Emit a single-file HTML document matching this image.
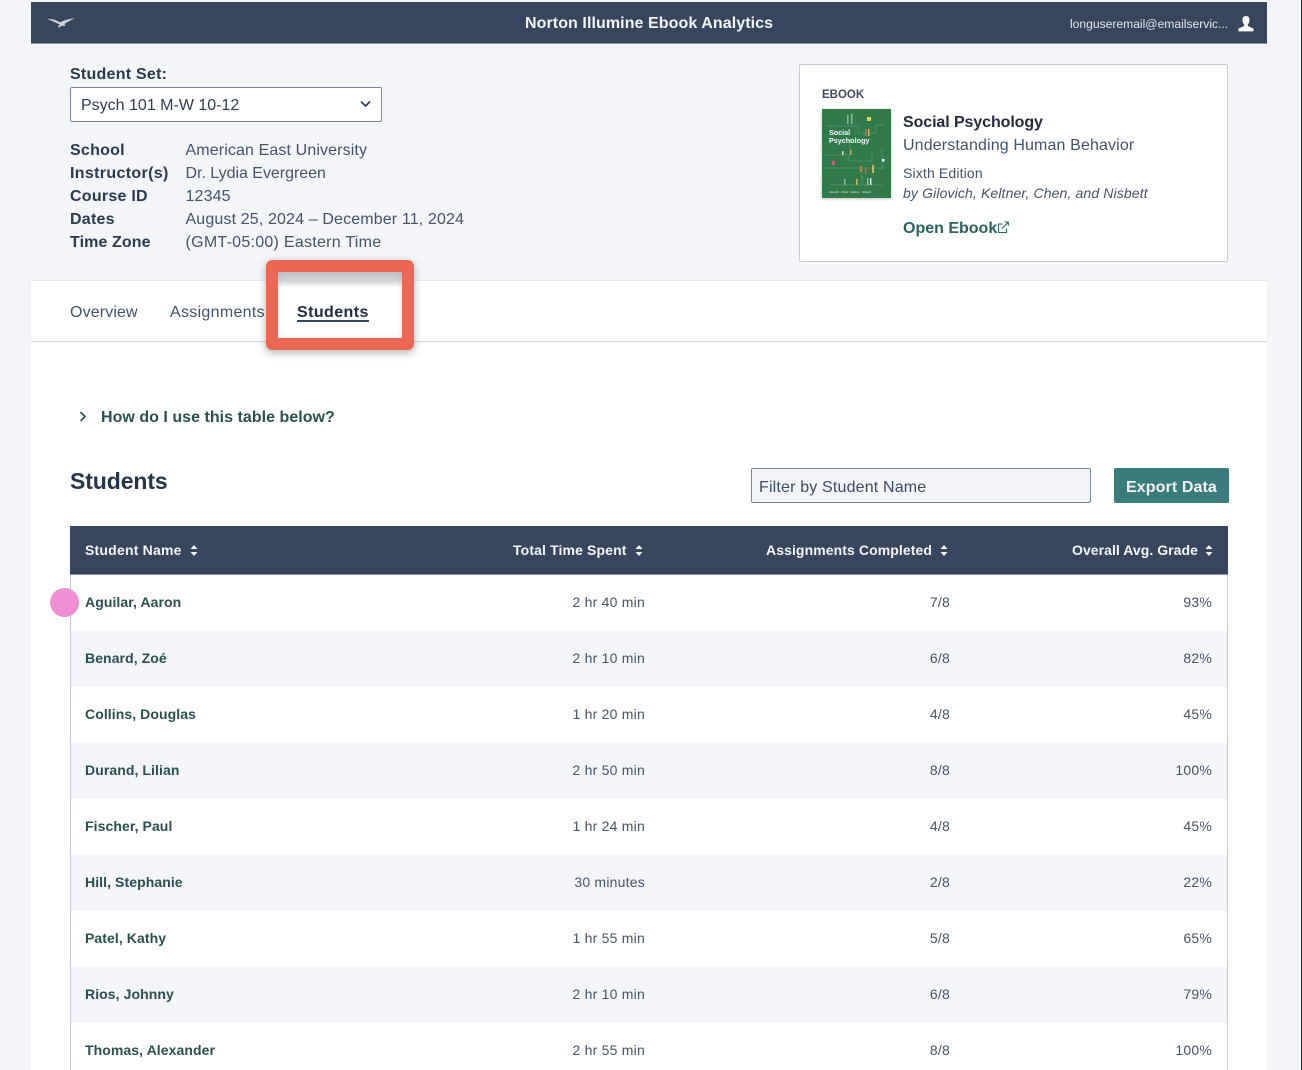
<!DOCTYPE html>
<html lang="en"><head><meta charset="utf-8"><title>Norton Illumine Ebook Analytics</title>
<style>
html{margin:0;padding:0;height:1070px;overflow:hidden}
body{margin:0;padding:0;width:1302px;height:1070px;position:relative;overflow:hidden;background:#f3f5f9;font-family:"Liberation Sans",sans-serif;color:#3d4b60}
.a{position:absolute;white-space:nowrap}
.t{position:absolute;white-space:nowrap;height:20px;line-height:20px}
.b{font-weight:bold}
.lab{left:70px;font-size:16px;font-weight:bold;color:#2c3a4e;letter-spacing:.25px}
.val{left:185.5px;font-size:16px;color:#44536a;letter-spacing:.14px}
.row{position:absolute;left:71px;width:1156px;height:56px}
.row.g{background:#f3f5f9}
.nm{position:absolute;left:14px;top:17px;line-height:20px;font-size:14px;font-weight:bold;color:#29504f;letter-spacing:.08px;white-space:nowrap}
.c{position:absolute;top:17px;line-height:20px;font-size:14px;color:#465469;letter-spacing:.22px;text-align:right;white-space:nowrap}
.c1{right:582px}.c2{right:277px}.c3{right:15px}
.th{position:absolute;top:14px;line-height:20px;font-size:14px;font-weight:bold;color:#f3f5f9;letter-spacing:.1px;white-space:nowrap}
</style></head><body>

<div class="a" style="left:1301px;top:0;width:1px;height:1070px;background:#2a2f38"></div>

<!-- top bar -->
<div class="a" style="left:31px;top:2px;width:1236px;height:42px;background:#37465c;border-bottom:1px solid #8793a5;box-sizing:border-box"></div>
<svg class="a" style="left:46px;top:17px" width="30" height="12" viewBox="0 0 30 12"><path d="M1 1.6 C6 1.8 10 3 14 5.2 C18 3.4 23 1.6 29 1.2 C25 3 21 5 18.5 7 L19.5 9 L16 8.6 L12.5 10.6 L12 8.8 L14 7.6 C10 5.4 5 3.8 1 1.6Z" fill="#cfd5dd"/></svg>
<div class="t b" style="left:525px;top:14px;font-size:16px;color:#f3f5f9;letter-spacing:.08px">Norton Illumine Ebook Analytics</div>
<div class="t" style="left:1070px;top:14px;font-size:12.1px;color:#e4e8ee">longuseremail@emailservic...</div>
<svg class="a" style="left:1238px;top:16px" width="16" height="16" viewBox="0 0 16 16"><path d="M8 0 C10.4 0 11.5 1.8 11.5 4 C11.5 6 10.8 7.6 9.8 8.6 L9.8 10 L15.6 12.6 L15.6 15.4 L.4 15.4 L.4 12.6 L6.2 10 L6.2 8.6 C5.2 7.6 4.5 6 4.5 4 C4.5 1.8 5.6 0 8 0Z" fill="#fff"/></svg>

<!-- student set -->
<div class="t lab" style="top:65px">Student Set:</div>
<div class="a" style="left:70px;top:87px;width:312px;height:35px;box-sizing:border-box;background:#fff;border:1px solid #77849a;border-radius:2px"></div>
<div class="t" style="left:81px;top:96px;font-size:16px;color:#2f3d52">Psych 101 M-W 10-12</div>
<svg class="a" style="left:360px;top:100px" width="11" height="8" viewBox="0 0 11 8"><path d="M1 1.5 L5.5 6 L10 1.5" fill="none" stroke="#2f3d52" stroke-width="1.7"/></svg>

<div class="t lab" style="top:141px">School</div><div class="t val" style="top:141px;letter-spacing:.12px">American East University</div>
<div class="t lab" style="top:164px;letter-spacing:.34px">Instructor(s)</div><div class="t val" style="top:164px;letter-spacing:-.02px">Dr. Lydia Evergreen</div>
<div class="t lab" style="top:187px">Course ID</div><div class="t val" style="top:187px">12345</div>
<div class="t lab" style="top:210px">Dates</div><div class="t val" style="top:210px">August 25, 2024 – December 11, 2024</div>
<div class="t lab" style="top:233px;letter-spacing:.1px">Time Zone</div><div class="t val" style="top:233px;letter-spacing:.27px">(GMT-05:00) Eastern Time</div>

<!-- ebook card -->
<div class="a" style="left:799px;top:64px;width:429px;height:198px;box-sizing:border-box;background:#fff;border:1px solid #c5ccd6;border-radius:2px"></div>
<div class="t b" style="left:822px;top:85px;font-size:11.5px;color:#3d4b60">EBOOK</div>
<svg class="a" style="left:822px;top:109px;box-shadow:0 1px 3px rgba(0,0,0,.25)" width="69" height="89" viewBox="0 0 69 89">
<rect width="69" height="89" fill="#317a4a"/>
<g fill="none" stroke="#6fa584" stroke-width=".5"><path d="M5 17H36V24H54M54 24V16H62M0 46H27V52H50V42M0 59H22M22 59H62M8 76H60M28 30V46M40 60V75M60 40V60"/></g>
<text x="7" y="26" font-size="7.2" font-weight="bold" fill="#f3f5f9" font-family="Liberation Sans,sans-serif">Social</text>
<text x="7" y="34" font-size="7.2" font-weight="bold" fill="#f3f5f9" font-family="Liberation Sans,sans-serif">Psychology</text>
<text x="7" y="84" font-size="2.8" fill="#e4ece6" font-family="Liberation Sans,sans-serif">Gilovich · Chen · Keltner · Nisbett</text>
<rect x="45" y="8" width="4" height="4" fill="#e6cf4a"/><rect x="25" y="6" width="1.5" height="9" fill="#8fb89c"/><rect x="29" y="5" width="1.5" height="10" fill="#8fb89c"/>
<rect x="43" y="20" width="1.5" height="7" fill="#c9607a"/><rect x="46" y="20" width="1.5" height="7" fill="#c9b552"/>
<rect x="28" y="41" width="1.5" height="5" fill="#c9b552"/><rect x="20" y="42" width="1.5" height="4" fill="#d8e2da"/>
<rect x="10" y="52" width="3" height="4" fill="#c9607a"/><rect x="38" y="57" width="1.5" height="6" fill="#d09040"/><rect x="43" y="58" width="1.5" height="7" fill="#c9607a"/><rect x="50" y="56" width="2" height="8" fill="#c9b552"/><rect x="60" y="50" width="2.5" height="2.5" fill="#f3f5f9"/>
<rect x="34" y="70" width="1.5" height="6" fill="#c9b552"/><rect x="22" y="70" width="1.5" height="6" fill="#8fb89c"/><rect x="45" y="69" width="1.5" height="7" fill="#8fb89c"/><rect x="48" y="69" width="1.5" height="7" fill="#d8e2da"/>
</svg>
<div class="t b" style="left:903px;top:113px;font-size:16px;color:#222c3b;letter-spacing:-.09px">Social Psychology</div>
<div class="t" style="left:903px;top:136px;font-size:16px;color:#44536a;letter-spacing:.13px">Understanding Human Behavior</div>
<div class="t" style="left:903px;top:163px;font-size:14px;color:#44536a;letter-spacing:.15px">Sixth Edition</div>
<div class="t" style="left:903px;top:183px;font-size:14px;font-style:italic;color:#44536a;letter-spacing:.13px">by Gilovich, Keltner, Chen, and Nisbett</div>
<div class="t b" style="left:903px;top:219px;font-size:16px;color:#2a6360">Open Ebook</div>
<svg class="a" style="left:997px;top:221px" width="12" height="13" viewBox="0 0 12 13"><path d="M5.5 3H1.5V11.5H9.5V7.5M5 7.5L11 1.5M7.5 1H11.3V4.8" fill="none" stroke="#2a6360" stroke-width="1.1"/></svg>

<!-- main panel -->
<div class="a" style="left:31px;top:281px;width:1236px;height:789px;background:#fff"></div>
<div class="a" style="left:31px;top:280px;width:1236px;height:62px;box-sizing:border-box;background:#fff;border-top:1px solid #e6e9ee;border-bottom:1px solid #d5d9df;box-shadow:0 1px 2px rgba(0,0,0,.05)"></div>
<div class="t" style="left:70px;top:303px;font-size:16px;color:#44536a;letter-spacing:.13px">Overview</div>
<div class="t" style="left:170px;top:303px;font-size:16px;color:#44536a;letter-spacing:.3px">Assignments</div>
<div class="t b" style="left:297px;top:303px;font-size:16px;color:#222c3b;letter-spacing:.42px">Students</div>
<div class="a" style="left:297px;top:320px;width:72px;height:2px;background:#37465c"></div>

<!-- highlight -->
<div class="a" style="left:278px;top:272px;width:124px;height:16px;background:linear-gradient(to bottom,#c6c8cb 0,#cfd1d4 8px,#f0f0f1 13px,#fff 16px)"></div>
<div class="a" style="left:266px;top:260px;width:148px;height:90px;box-sizing:border-box;border:12px solid #ec6753;border-radius:6px;box-shadow:0 3px 9px rgba(0,0,0,.3),inset 0 0 6px rgba(0,0,0,.12)"></div>

<svg class="a" style="left:79px;top:411px" width="8" height="11" viewBox="0 0 8 11"><path d="M1.5 1L6 5.5L1.5 10" fill="none" stroke="#29504f" stroke-width="1.6"/></svg>
<div class="t b" style="left:101px;top:408px;font-size:16px;color:#29504f;letter-spacing:.03px">How do I use this table below?</div>
<div class="a b" style="left:70px;top:466px;line-height:30px;font-size:23px;color:#263447;letter-spacing:-.1px">Students</div>

<div class="a" style="left:751px;top:468px;width:340px;height:35px;box-sizing:border-box;background:#f3f5f9;border:1px solid #77849a;border-radius:2px"></div>
<div class="t" style="left:759px;top:478px;font-size:16px;color:#3d4b60;letter-spacing:.17px">Filter by Student Name</div>
<div class="a" style="left:1114px;top:468px;width:115px;height:35px;background:#3a7b7b;border-radius:2px"></div>
<div class="t b" style="left:1126px;top:478px;font-size:16px;color:#f3f5f9;letter-spacing:.1px">Export Data</div>

<!-- table -->
<div class="a" style="left:70px;top:526px;width:1158px;height:49px;background:#37465c;border-bottom:1px solid #8793a5;box-sizing:border-box">
<div class="th" style="left:15px;letter-spacing:.21px">Student Name</div>
<div class="th" style="left:443px;letter-spacing:.13px">Total Time Spent</div>
<div class="th" style="left:696px;letter-spacing:.09px">Assignments Completed</div>
<div class="th" style="left:1002px;letter-spacing:.05px">Overall Avg. Grade</div>
<svg class="a" style="left:120px;top:19px" width="8" height="11" viewBox="0 0 8 11"><path d="M4 0L7.5 4H.5ZM4 11L.5 7H7.5Z" fill="#f3f5f9"/></svg>
<svg class="a" style="left:565px;top:19px" width="8" height="11" viewBox="0 0 8 11"><path d="M4 0L7.5 4H.5ZM4 11L.5 7H7.5Z" fill="#f3f5f9"/></svg>
<svg class="a" style="left:870px;top:19px" width="8" height="11" viewBox="0 0 8 11"><path d="M4 0L7.5 4H.5ZM4 11L.5 7H7.5Z" fill="#f3f5f9"/></svg>
<svg class="a" style="left:1135px;top:19px" width="8" height="11" viewBox="0 0 8 11"><path d="M4 0L7.5 4H.5ZM4 11L.5 7H7.5Z" fill="#f3f5f9"/></svg>
</div>
<div class="a" style="left:70px;top:575px;width:1px;height:495px;background:#c5ccd6"></div>
<div class="a" style="left:1227px;top:575px;width:1px;height:495px;background:#c5ccd6"></div>

<div class="row" style="top:575px"><div class="nm">Aguilar, Aaron</div><div class="c c1">2 hr 40 min</div><div class="c c2">7/8</div><div class="c c3">93%</div></div>
<div class="row g" style="top:631px"><div class="nm">Benard, Zoé</div><div class="c c1">2 hr 10 min</div><div class="c c2">6/8</div><div class="c c3">82%</div></div>
<div class="row" style="top:687px"><div class="nm">Collins, Douglas</div><div class="c c1">1 hr 20 min</div><div class="c c2">4/8</div><div class="c c3">45%</div></div>
<div class="row g" style="top:743px"><div class="nm">Durand, Lilian</div><div class="c c1">2 hr 50 min</div><div class="c c2">8/8</div><div class="c c3">100%</div></div>
<div class="row" style="top:799px"><div class="nm">Fischer, Paul</div><div class="c c1">1 hr 24 min</div><div class="c c2">4/8</div><div class="c c3">45%</div></div>
<div class="row g" style="top:855px"><div class="nm">Hill, Stephanie</div><div class="c c1">30 minutes</div><div class="c c2">2/8</div><div class="c c3">22%</div></div>
<div class="row" style="top:911px"><div class="nm">Patel, Kathy</div><div class="c c1">1 hr 55 min</div><div class="c c2">5/8</div><div class="c c3">65%</div></div>
<div class="row g" style="top:967px"><div class="nm">Rios, Johnny</div><div class="c c1">2 hr 10 min</div><div class="c c2">6/8</div><div class="c c3">79%</div></div>
<div class="row" style="top:1023px;height:47px"><div class="nm">Thomas, Alexander</div><div class="c c1">2 hr 55 min</div><div class="c c2">8/8</div><div class="c c3">100%</div></div>

<div class="a" style="left:50px;top:588px;width:29px;height:29px;border-radius:50%;background:#f08fd3"></div>
</body></html>
